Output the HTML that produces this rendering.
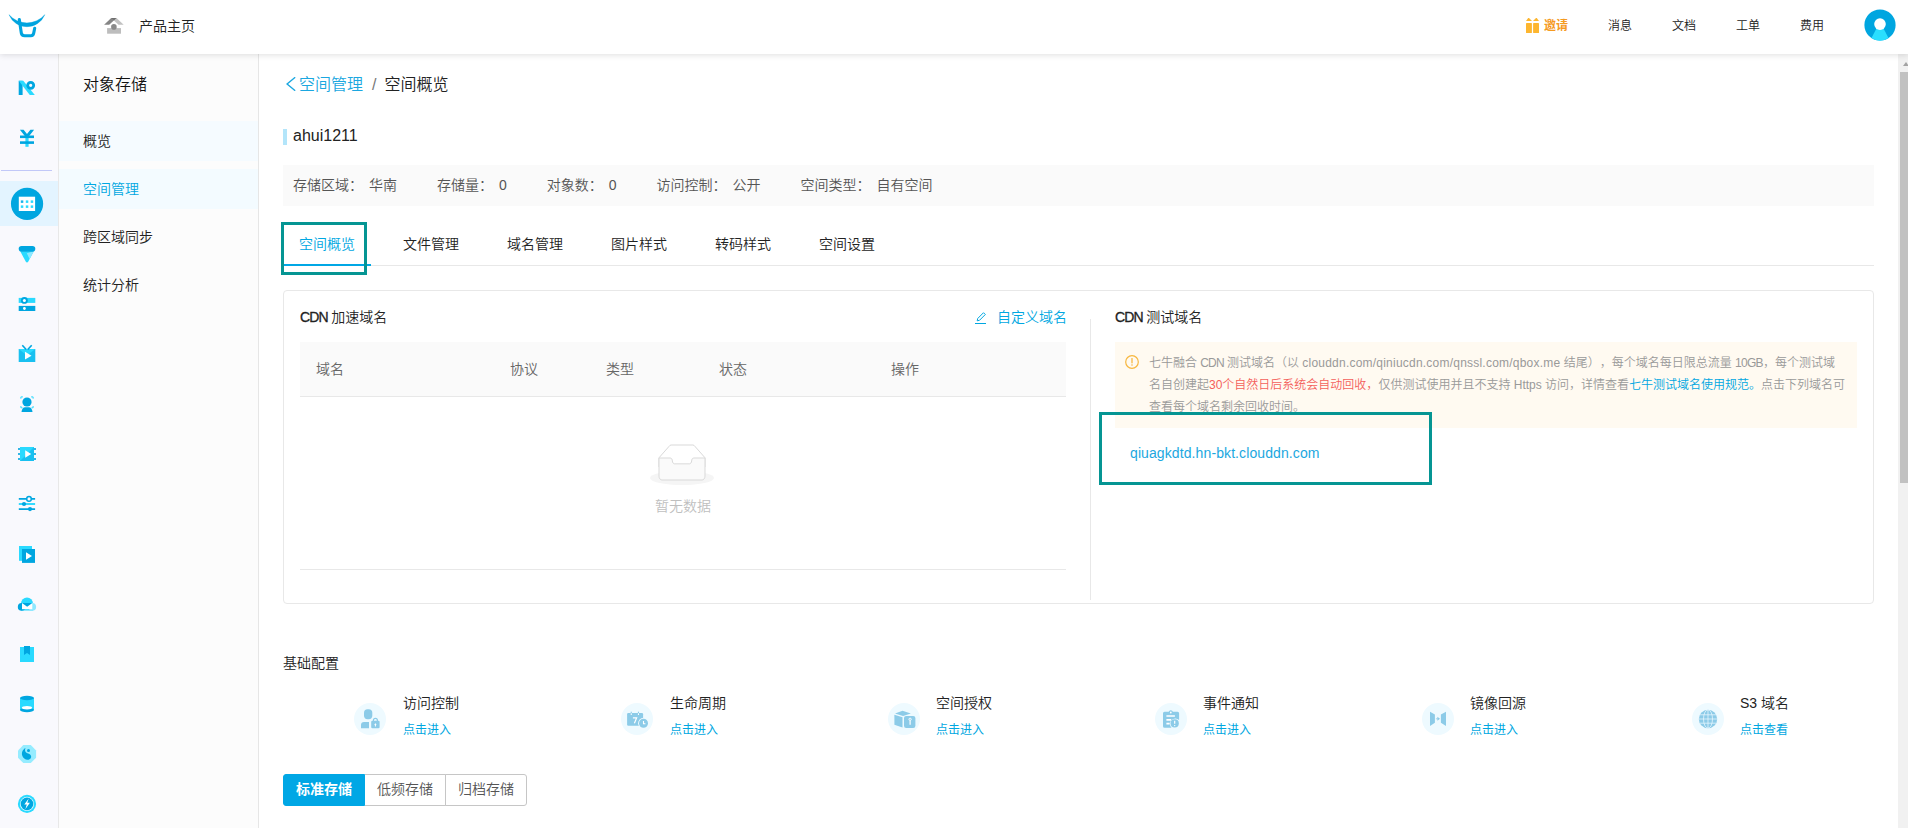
<!DOCTYPE html>
<html lang="zh-CN">
<head>
<meta charset="utf-8">
<title>空间概览 - 对象存储</title>
<style>
*{box-sizing:border-box;margin:0;padding:0}
html,body{width:1908px;height:828px;overflow:hidden;background:#fff}
body{position:relative;font-family:"Liberation Sans","Noto Sans CJK SC",sans-serif;font-size:14px;color:#333;line-height:22px;font-weight:350;text-spacing-trim:space-all}
a{color:#00a7e1;text-decoration:none}
.abs{position:absolute}
/* header */
#hd{position:absolute;left:0;top:0;width:1908px;height:54px;background:#fff;box-shadow:0 1px 6px rgba(0,0,0,.13);z-index:10}
#hd .logo{position:absolute;left:7px;top:12px}
#hd .home{position:absolute;left:103px;top:17px}
#hd .hometxt{position:absolute;left:139px;top:15px;font-size:14px;color:#222;white-space:nowrap}
#hd .nav{position:absolute;top:15px;font-size:12px;color:#222;white-space:nowrap}
#hd .invite{color:#f59a1f;font-weight:bold}
#hd .avatar{position:absolute;left:1863.500px;top:9.400px}
/* rail */
#rail{position:absolute;left:0;top:54px;width:59px;height:774px;background:#f9f9fd;border-right:1px solid #e8e8e8}
#rail .sep{position:absolute;left:1px;top:116px;width:51px;height:1px;background:#c2c8f8}
#rail .act{position:absolute;left:0;top:127px;width:58px;height:45px;background:#e3f4ff}
#rail svg{position:absolute}
/* sidebar */
#side{position:absolute;left:59px;top:54px;width:200px;height:774px;background:#fcfcfc;border-right:1px solid #e6e6e6}
#side h2{position:absolute;left:24px;top:19px;font-size:16px;font-weight:350;color:#111;line-height:24px;white-space:nowrap}
#side .mi{position:absolute;left:0;width:199px;height:40px;line-height:40px;padding-left:24px;font-size:14px;color:#222;white-space:nowrap}
#side .mi.hov{background:#f5fbff}
#side .mi.on{background:#f3fbff;color:#00a7e1}
/* main */
#main{position:absolute;left:259px;top:54px;width:1639px;height:774px;background:#fff}
/* scrollbar */
#sb{position:absolute;left:1898px;top:54px;width:17px;height:774px;background:#f1f1f1}
#sb .thumb{position:absolute;left:2px;top:18px;width:13px;height:411px;background:#c1c1c1}
#sb .up{position:absolute;left:5px;top:7.500px;width:0;height:0;border-left:3.500px solid transparent;border-right:3.500px solid transparent;border-bottom:4px solid #a3a3a3}

/* main content */
#main .bc{position:absolute;left:40px;top:19px;font-size:16px;line-height:24px;white-space:nowrap;color:#222}
#main .bc a{color:#1ba7e0}
#main .bc .sl{color:#777;margin:0 8px 0 9px}
#main .chev{position:absolute;left:27px;top:23px}
#main .tbar{position:absolute;left:24px;top:75px;width:4px;height:16px;background:#b3e5fa}
#main .ttl{position:absolute;left:34px;top:70px;font-size:16px;line-height:24px;color:#222;white-space:nowrap}
#main .info{position:absolute;left:24px;top:111px;width:1591px;height:41px;background:#fafafa;padding-left:10px;line-height:40px;font-size:14px;color:#555;white-space:nowrap}
#main .info span.v{margin-left:6px;margin-right:40px;color:#555}
#main .tabs{position:absolute;left:24px;top:169px;width:1591px;height:43px;border-bottom:1px solid #e8e8e8}
#main .tab{position:absolute;top:0;height:42px;line-height:42px;font-size:14px;color:#222;white-space:nowrap}
#main .tab.on{color:#00a7e1}
#main .ink{position:absolute;left:24px;top:210px;width:88px;height:2px;background:#00a7e5}
.teal{position:absolute;border:3px solid #059593}

/* card */
#card{position:absolute;left:24px;top:236px;width:1591px;height:314px;border:1px solid #e8e8e8;border-radius:4px;background:#fff}
#card .h{position:absolute;top:14px;font-size:14px;line-height:22px;color:#222;white-space:nowrap;font-weight:350}
#card .h b{font-weight:400;-webkit-text-stroke:.3px #222;letter-spacing:-.9px;margin-right:-.3px}
#card .cust{position:absolute;left:713px;top:14px;font-size:14px;line-height:22px;color:#00a7e1;white-space:nowrap}
#card .pen{position:absolute;left:691px;top:20px}
#card .th{position:absolute;left:16px;top:50px;width:766px;height:55px;background:#fafafa;border-bottom:1px solid #e8e8e8}
#card .th span{position:absolute;top:16px;line-height:22px;font-size:14px;color:#666;white-space:nowrap}
#card .empty{position:absolute;left:366px;top:152px}
#card .emptytxt{position:absolute;left:343px;top:203px;width:112px;text-align:center;font-size:14px;line-height:22px;color:#bfbfbf;white-space:nowrap}
#card .bl{position:absolute;left:16px;top:277px;width:766px;height:1px;background:#e8e8e8}
#card .vl{position:absolute;left:806px;top:27px;width:1px;height:281px;background:#e8e8e8}
#card .alert{position:absolute;left:831px;top:50px;width:742px;height:86px;background:#fffaf1;font-size:12px;line-height:22px;color:#999;padding:10px 0 0 34px;white-space:nowrap}
#card .alert .red{color:#f45f5b}
#card .alert a{color:#00a7e1}
#card .aicon{position:absolute;left:841px;top:63px}
#card .dom{position:absolute;left:846px;top:150px;font-size:14px;line-height:22px;color:#1ba7e0;white-space:nowrap;letter-spacing:.1px}

/* bottom */
#main .sec{position:absolute;left:24px;top:598px;font-size:14px;line-height:22px;color:#222;white-space:nowrap}
#main .ci{position:absolute;top:649px;width:32px;height:32px;border-radius:50%;background:#eefaff}
#main .ci svg{position:absolute;left:0;top:0}
#main .ct{position:absolute;top:638px;font-size:14px;line-height:22px;color:#222;white-space:nowrap}
#main .cl{position:absolute;top:667px;font-size:12px;line-height:18px;color:#00a7e1;white-space:nowrap;font-weight:400}
#main .rg{position:absolute;left:24px;top:720px;height:32px;white-space:nowrap;font-size:14px}
#main .rg span{position:absolute;top:0;height:32px;line-height:28px;text-align:center;border:1px solid #c6c6c6;color:#555;background:#fff}
#main .rg span.on{background:#00a7e5;border-color:#00a7e5;color:#fff;font-weight:bold;border-radius:3px 0 0 3px}
</style>
</head>
<body>

<div id="hd">
  <svg class="logo" width="40" height="28" viewBox="7 12 40 28"><path d="M9 14.700A19.350 19.350 0 0 0 44.800 14.700A23.600 23.600 0 0 1 9 14.700z" fill="#00a4df" stroke="#00a4df" stroke-width=".4" stroke-linejoin="round"/><path d="M19.300 19.600l2 13.300q.4 2.800 3.300 2.800h6.300q2.400 0 2.800-2.600l1-4.900" fill="none" stroke="#00a4df" stroke-width="3.100" stroke-linecap="round" stroke-linejoin="round"/></svg>
  <svg class="home" width="22" height="18" viewBox="103 17 22 18"><path d="M104.100 24.700L111.200 18h5.300l-7.300 6.700z" fill="#858585"/><path d="M111.500 18h5l7.200 6.700h-5.200l-4.600-4.300z" fill="#c2c2c2"/><path d="M111.200 18h5.300l-2.600 2.400z" fill="#6e6e6e"/><rect x="107.100" y="28.100" width="13.900" height="5.600" fill="#bdbdbd"/><circle cx="113.900" cy="26.900" r="2.800" fill="#8a8a8a"/></svg>
  <div class="hometxt">产品主页</div>
  <svg class="abs" style="left:1525px;top:17px" width="15" height="17" viewBox="1525 17 15 17" fill="#fdb62f"><rect x="1526" y="23" width="5.900" height="10" rx=".6"/><rect x="1533.100" y="23" width="5.900" height="10" rx=".6"/><path d="M1526 21l2.200-3h.8l3 3z"/><path d="M1539 21l-2.200-3h-.8l-3 3z"/></svg>
  <div class="nav invite" style="left:1544px">邀请</div>
  <div class="nav" style="left:1608px">消息</div>
  <div class="nav" style="left:1672px">文档</div>
  <div class="nav" style="left:1736px">工单</div>
  <div class="nav" style="left:1800px">费用</div>
  <svg class="avatar" width="32" height="32" viewBox="1863.500 9.400 32 32"><circle cx="1879.500" cy="25.400" r="15.600" fill="#00a6e0"/><path d="M1875.700 29.500h7.600l4.700 8.900a15.600 15.600 0 0 1-17 0z" fill="#2adfff"/><circle cx="1879.500" cy="24.500" r="5.800" fill="#fff"/></svg>
</div>

<div id="rail">
  <div class="sep"></div>
  <div class="act"></div>
  <svg style="left:0;top:0" width="58" height="774" viewBox="0 54 58 774">
    <!-- 1 logo N -->
    <rect x="18.700" y="80.800" width="3.900" height="14.200" fill="#00a6e0"/>
    <path d="M18.700 80.800h4.600L34.800 95h-5z" fill="#2adaff"/>
    <path d="M30.700 80.900a4.400 4.400 0 1 0 0 8.800a4.400 4.400 0 1 0 0-8.800zm0 2.800a1.600 1.600 0 1 1 0 3.200a1.600 1.600 0 1 1 0-3.200z" fill="#00a6e0" fill-rule="evenodd"/>
    <!-- 2 yen -->
    <rect x="25.400" y="136" width="3.200" height="10.800" fill="#2adaff"/>
    <path d="M19.900 129.800h3.700l3.400 4.200 3.400-4.200h3.700l-5.900 7.400h-2.400z" fill="#00a6e0"/>
    <rect x="20" y="135.500" width="14" height="2.600" fill="#00a6e0"/>
    <rect x="20" y="141.300" width="14" height="2.600" fill="#00a6e0"/>
    <!-- 3 active: kodo -->
    <circle cx="27.050" cy="203.850" r="16.100" fill="#00a6e0"/>
    <rect x="18.800" y="196.700" width="16.300" height="14.300" fill="#fff"/>
    <g fill="#2adaff"><rect x="20.800" y="200.400" width="2.500" height="2.500" fill="#1bb4ea"/><rect x="25.800" y="200.400" width="2.500" height="2.500"/><rect x="30.700" y="200.400" width="2.500" height="2.500"/><rect x="20.800" y="205.400" width="2.500" height="2.500"/><rect x="25.800" y="205.400" width="2.500" height="2.500"/><rect x="30.700" y="205.400" width="2.500" height="2.500"/></g>
    <!-- 4 funnel -->
    <path d="M20.200 251.300h13.600l-5.500 10.200q-1.300 2.200-2.600 0z" fill="#2adaff"/>
    <path d="M26.800 253.200l7-1.900-4.200 7.800z" fill="#8ee8ff"/>
    <rect x="18.700" y="246" width="16.600" height="5.700" rx="2.850" fill="#00a6e0"/>
    <!-- 5 server -->
    <rect x="18.700" y="297.900" width="16.600" height="5" fill="#2adaff"/>
    <circle cx="24.400" cy="300.400" r="3.400" fill="#00a6e0"/><circle cx="24.400" cy="300.400" r="1.500" fill="#fff"/>
    <rect x="18.700" y="305.900" width="16.600" height="5.100" fill="#00a6e0"/><circle cx="24.400" cy="308.500" r="1.400" fill="#fff"/>
    <!-- 6 tv -->
    <rect x="18.700" y="349" width="16.600" height="13" fill="#19c0f0"/>
    <path d="M18.700 349h16.600L27 355.500z" fill="#2adaff"/>
    <path d="M25 351.800v7.700l6.500-3.850z" fill="#fff"/>
    <path d="M22.300 345.200l3.900 4.300M31.700 345.200l-3.900 4.300" stroke="#00a6e0" stroke-width="1.600" fill="none"/>
    <!-- 7 face -->
    <circle cx="27" cy="402" r="4.600" fill="#00a6e0"/>
    <path d="M21.500 412q.5-4.700 3.700-4.700h3.600q3.200 0 3.700 4.700z" fill="#00a6e0"/>
    <path d="M20.900 398.700v-1.800h2M31.100 396.900h2v1.800M33.100 406v1.800h-1.600M22.500 407.800h-1.600v-1.800" fill="none" stroke="#2adaff" stroke-width="1"/>
    <!-- 8 film -->
    <rect x="20" y="447" width="14" height="14" fill="#19c0f0"/>
    <path d="M20 447h14L20 461z" fill="#2adaff"/>
    <path d="M25.200 450.200v7.600l6-3.800z" fill="#fff"/>
    <g fill="#00a6e0"><rect x="18" y="448.200" width="2" height="1.600"/><rect x="18" y="453.200" width="2" height="1.600"/><rect x="18" y="458.200" width="2" height="1.600"/><rect x="34" y="448.200" width="2" height="1.600"/><rect x="34" y="453.200" width="2" height="1.600"/><rect x="34" y="458.200" width="2" height="1.600"/></g>
    <!-- 9 sliders -->
    <path d="M18.800 498.900h16.300M18.800 509.100h16.300" stroke="#00a6e0" stroke-width="1.900"/>
    <path d="M18.800 504h16.300" stroke="#2adaff" stroke-width="1.900"/>
    <circle cx="29" cy="498.900" r="2.300" fill="#f9f9fd" stroke="#00a6e0" stroke-width="1.500"/>
    <circle cx="24" cy="504" r="2.100" fill="#00a6e0"/><circle cx="30" cy="509.100" r="2.100" fill="#00a6e0"/>
    <!-- 10 squares -->
    <rect x="19" y="546" width="13" height="14.800" fill="#2adaff"/>
    <rect x="22" y="549" width="13" height="13.900" fill="#00a6e0"/>
    <path d="M26 552.300v7.400l6-3.700z" fill="#fff"/>
    <!-- 11 cloud mail -->
    <path d="M21 603.500a6 6 0 0 1 12 0v6.900H21z" fill="#2adaff"/>
    <circle cx="21.600" cy="606.900" r="3.800" fill="#00a6e0"/>
    <circle cx="32.300" cy="606.900" r="3.800" fill="#8ee8ff"/>
    <rect x="22" y="603.100" width="10.300" height="6.100" fill="#fff"/>
    <path d="M22 603.100h10.300l-5.150 3.700z" fill="#00a6e0"/>
    <!-- 12 bookmark -->
    <rect x="20" y="647" width="14" height="15" fill="#2adaff"/>
    <path d="M24 646h6v9l-3-2-3 2z" fill="#00a6e0"/>
    <!-- 13 cylinder -->
    <rect x="20" y="698" width="14" height="12" fill="#2adaff"/>
    <ellipse cx="27" cy="710" rx="7" ry="2.200" fill="#00a6e0"/>
    <ellipse cx="27" cy="707.700" rx="5.100" ry="1.700" fill="#fff"/>
    <ellipse cx="27" cy="698" rx="7" ry="2.200" fill="#00a6e0"/>
    <!-- 14 octagon -->
    <path d="M23.300 745.100h7.500l5.300 5.300v7.300L30.800 763h-7.500l-5.300-5.300v-7.300z" fill="#96ecff"/>
    <path d="M25.600 748.100C22.500 749.500 21.400 753 22.200 755.600C23 758.600 26 760.300 28.600 759.700C30.600 759.200 31.600 757.500 31 755.800C30.300 753.700 27.600 754 26.100 752.600C24.800 751.400 24.800 749.400 25.600 748.100z" fill="#00a6e0"/>
    <circle cx="28.500" cy="750.500" r="1.500" fill="#00a6e0"/>
    <!-- 15 lightning -->
    <circle cx="27" cy="803.900" r="9.100" fill="#2adaff"/>
    <circle cx="27" cy="803.900" r="7.100" fill="#d9f7ff"/>
    <circle cx="27" cy="803.900" r="6.300" fill="#00a6e0"/>
    <path d="M28.700 798.600l-4.400 6h2.500l-1.500 4.700 4.600-6.500h-2.600z" fill="#fff"/>
  </svg>
</div>

<div id="side">
  <h2>对象存储</h2>
  <div class="mi hov" style="top:67px">概览</div>
  <div class="mi on" style="top:115px">空间管理</div>
  <div class="mi" style="top:163px">跨区域同步</div>
  <div class="mi" style="top:211px">统计分析</div>
</div>

<div id="main">

  <svg class="chev" width="10" height="14" viewBox="0 0 10 14"><path d="M9.200 .3 1.100 7l8.100 6.700" fill="none" stroke="#1ba7e0" stroke-width="1.400"/></svg>
  <div class="bc"><a>空间管理</a><span class="sl">/</span><span>空间概览</span></div>
  <div class="tbar"></div>
  <div class="ttl">ahui1211</div>
  <div class="info">存储区域：<span class="v">华南</span>存储量：<span class="v">0</span>对象数：<span class="v">0</span>访问控制：<span class="v">公开</span>空间类型：<span class="v">自有空间</span></div>
  <div class="tabs">
    <div class="tab on" style="left:16px">空间概览</div>
    <div class="tab" style="left:120px">文件管理</div>
    <div class="tab" style="left:224px">域名管理</div>
    <div class="tab" style="left:328px">图片样式</div>
    <div class="tab" style="left:432px">转码样式</div>
    <div class="tab" style="left:536px">空间设置</div>
  </div>
  <div class="ink"></div>
  <div class="teal" style="left:22px;top:168px;width:86px;height:53px"></div>

  <div id="card"><div style="position:absolute;left:0;top:1px;width:100%;height:0">
    <div class="h" style="left:16px"><b>CDN</b> 加速域名</div>
    <svg class="pen" width="12" height="12" viewBox="0 0 12 12"><path d="M0 11.500h11" stroke="#00a7e1" stroke-width="1" fill="none"/><path d="M2.200 8.800l.5-2.300 5.800-5.800 1.800 1.800-5.800 5.800z" stroke="#00a7e1" stroke-width="1" fill="none" stroke-linejoin="round"/></svg>
    <a class="cust">自定义域名</a>
    <div class="th"><span style="left:16px">域名</span><span style="left:210px">协议</span><span style="left:306px">类型</span><span style="left:419px">状态</span><span style="left:591px">操作</span></div>
    <svg class="empty" width="64" height="41" viewBox="0 0 64 41"><g transform="translate(0 1)" fill="none" fill-rule="evenodd"><ellipse fill="#f5f5f5" cx="32" cy="33" rx="32" ry="7"/><g fill-rule="nonzero" stroke="#d9d9d9"><path d="M55 12.760L44.854 1.258C44.367.474 43.656 0 42.907 0H21.093c-.749 0-1.460.474-1.947 1.257L9 12.761V22h46v-9.240z"/><path d="M41.613 15.931c0-1.605.994-2.930 2.227-2.931H55v18.137C55 33.260 53.680 35 52.050 35h-40.100C10.320 35 9 33.259 9 31.137V13h11.160c1.233 0 2.227 1.323 2.227 2.928v.022c0 1.605 1.005 2.901 2.237 2.901h14.752c1.232 0 2.237-1.308 2.237-2.913v-.007z" fill="#fafafa"/></g></g></svg>
    <div class="emptytxt">暂无数据</div>
    <div class="bl"></div>
    <div class="vl"></div>
    <div class="h" style="left:831px"><b>CDN</b> 测试域名</div>
    <div class="alert">七牛融合 <span style="letter-spacing:-.9px">CDN</span> 测试域名（以 <span style="letter-spacing:.22px">clouddn.com/qiniucdn.com/qnssl.com/qbox.me</span> 结尾），每个域名每日限总流量 <span style="letter-spacing:-.7px">10GB</span>，每个测试域<br>名自创建起<span class="red">30个自然日后系统会自动回收，</span>仅供测试使用并且不支持 Https 访问，详情查看<a>七牛测试域名使用规范。</a>点击下列域名可<br>查看每个域名剩余回收时间。</div>
    <svg class="aicon" width="14" height="14" viewBox="0 0 14 14"><circle cx="7" cy="7" r="6.300" fill="none" stroke="#f7b73f" stroke-width="1.200"/><path d="M7 3.600v4.200" stroke="#f7b73f" stroke-width="1.300" stroke-linecap="round"/><circle cx="7" cy="10" r=".8" fill="#f7b73f"/></svg>
    <div class="teal" style="left:815px;top:120px;width:333px;height:73px"></div>
    <a class="dom">qiuagkdtd.hn-bkt.clouddn.com</a>
  </div></div>

  <div class="sec">基础配置</div>

  <div class="ci" style="left:95px"><svg width="32" height="32" viewBox="0 0 32 32" fill="#8ccbe8"><rect x="10" y="6.200" width="8.300" height="10" rx="3.600"/><path d="M10 19h5v6.300H7V22a3 3 0 0 1 3-3z"/><path d="M19.400 17.900v-.5a2 2 0 0 1 4 0v.5" fill="none" stroke="#8ccbe8" stroke-width="1.200"/><rect x="17.200" y="17.700" width="8.400" height="7.600" rx="1.200"/><path d="M21.400 20.200l1.300 1.600h-.8v1.700h-1v-1.700h-.8z" fill="#fff"/></svg></div>
  <div class="ct" style="left:144px">访问控制</div><a class="cl" style="left:144px">点击进入</a>

  <div class="ci" style="left:362px"><svg width="32" height="32" viewBox="0 0 32 32" fill="#8ccbe8"><rect x="6.100" y="10" width="16" height="12.800" rx="1.200"/><rect x="9.700" y="8.700" width="1.100" height="1.700"/><rect x="16.900" y="8.700" width="1.100" height="1.700"/><rect x="9.750" y="10.300" width="1" height="1.700" fill="#fff"/><rect x="16.950" y="10.300" width="1" height="1.700" fill="#fff"/><path d="M11.900 14.900h3.700l-2.200 5.300" fill="none" stroke="#fff" stroke-width="1.200"/><circle cx="22.500" cy="20.200" r="5.400" fill="#eefaff"/><circle cx="22.500" cy="20.200" r="4.500"/><path d="M22.500 18v2.700h1.900" fill="none" stroke="#fff" stroke-width="1.100"/></svg></div>
  <div class="ct" style="left:411px">生命周期</div><a class="cl" style="left:411px">点击进入</a>

  <div class="ci" style="left:629px"><svg width="32" height="32" viewBox="0 0 32 32" fill="#8ccbe8"><path d="M7 10.500l7.600-2.700 8.200 2.700-7.700 2.400z"/><path d="M6.400 11.700l8.100 2.500v10.400l-8.100-2.900z"/><rect x="16" y="12.900" width="11.400" height="12" rx="2.200"/><circle cx="22.100" cy="16.300" r="1.150" fill="none" stroke="#fff" stroke-width=".9"/><path d="M22.100 17.500v4.300" stroke="#fff" stroke-width="1.200"/></svg></div>
  <div class="ct" style="left:677px">空间授权</div><a class="cl" style="left:677px">点击进入</a>

  <div class="ci" style="left:896px"><svg width="32" height="32" viewBox="0 0 32 32" fill="#8ccbe8"><path d="M9.500 8.700h4.200a2.200 2.200 0 0 1 4.200 0h4.700a1.500 1.500 0 0 1 1.500 1.500v6.900a5 5 0 0 0-7.600 7.600H9.500A1.500 1.500 0 0 1 8 23.200V10.200a1.500 1.500 0 0 1 1.500-1.500z"/><circle cx="15.800" cy="9.500" r=".9" fill="#fff"/><path d="M11.400 13h8.500M11.400 16.900h4.800M11.400 20.600h3.300" stroke="#fff" stroke-width="1.600"/><circle cx="19.700" cy="20.400" r="4.100"/><path d="M19.700 17.700v3" stroke="#fff" stroke-width="1.200"/><circle cx="19.700" cy="22.600" r=".7" fill="#fff"/></svg></div>
  <div class="ct" style="left:944px">事件通知</div><a class="cl" style="left:944px">点击进入</a>

  <div class="ci" style="left:1163px"><svg width="32" height="32" viewBox="0 0 32 32" fill="#8ccbe8"><path d="M8 8.700l4.900 2.800v8.200L8 23z"/><path d="M24 8.700l-5.100 2.800v8.200L24 23z"/><path d="M15.400 13.700l2.600 2-2.600 2z"/><rect x="13.900" y="15" width="1.800" height="1.400" opacity=".55"/></svg></div>
  <div class="ct" style="left:1211px">镜像回源</div><a class="cl" style="left:1211px">点击进入</a>

  <div class="ci" style="left:1433px"><svg width="32" height="32" viewBox="0 0 32 32"><circle cx="16" cy="16" r="9.200" fill="#8ccbe8"/><g fill="none" stroke="#e9f8ff" stroke-width=".75"><ellipse cx="16" cy="16" rx="4.500" ry="9.200"/><path d="M16 6.800v18.400M6.800 16h18.400M8 11.800h16M8 20.200h16"/></g></svg></div>
  <div class="ct" style="left:1481px">S3 域名</div><a class="cl" style="left:1481px">点击查看</a>

  <div class="rg"><span class="on" style="left:0;width:82px">标准存储</span><span style="left:82px;width:81px;border-left:0">低频存储</span><span style="left:162px;width:82px;border-radius:0 3px 3px 0">归档存储</span></div>



</div>

<div id="sb"><div class="up"></div><div class="thumb"></div></div>

</body>
</html>
